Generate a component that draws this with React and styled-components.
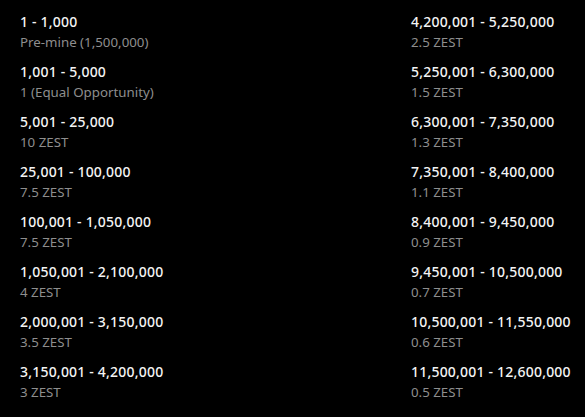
import React from 'react';
import styled, { createGlobalStyle } from 'styled-components';

const GlobalStyle = createGlobalStyle`
  html, body {
    margin: 0;
    background: #000;
  }
`;

const left = [
  ['1 - 1,000', 'Pre-mine (1,500,000)'],
  ['1,001 - 5,000', '1 (Equal Opportunity)'],
  ['5,001 - 25,000', '10 ZEST'],
  ['25,001 - 100,000', '7.5 ZEST'],
  ['100,001 - 1,050,000', '7.5 ZEST'],
  ['1,050,001 - 2,100,000', '4 ZEST'],
  ['2,000,001 - 3,150,000', '3.5 ZEST'],
  ['3,150,001 - 4,200,000', '3 ZEST'],
];

const right = [
  ['4,200,001 - 5,250,000', '2.5 ZEST'],
  ['5,250,001 - 6,300,000', '1.5 ZEST'],
  ['6,300,001 - 7,350,000', '1.3 ZEST'],
  ['7,350,001 - 8,400,000', '1.1 ZEST'],
  ['8,400,001 - 9,450,000', '0.9 ZEST'],
  ['9,450,001 - 10,500,000', '0.7 ZEST'],
  ['10,500,001 - 11,550,000', '0.6 ZEST'],
  ['11,500,001 - 12,600,000', '0.5 ZEST'],
];

const App = () => {
  return (
    <>
      <GlobalStyle />
      <Schedule>
        {[left, right].map((col, i) => (
          <Column key={i}>
            {col.map(([range, reward]) => (
              <Tier key={range}>
                <Range>{range}</Range>
                <Reward>{reward}</Reward>
              </Tier>
            ))}
          </Column>
        ))}
      </Schedule>
    </>
  );
};

export default App;

const Schedule = styled.div`
  width: 585px;
  height: 417px;
  box-sizing: border-box;
  padding: 12px 0 0 20px;
  display: grid;
  grid-template-columns: 391px auto;
  background: #000;
  font-family: "Noto Sans", "Open Sans", sans-serif;
`;

const Column = styled.div`
  display: flex;
  flex-direction: column;
  gap: 10px;
`;

const Tier = styled.div`
  display: flex;
  flex-direction: column;
  line-height: 20px;
`;

const Range = styled.span`
  color: #f4f4f4;
  font-size: 14px;
  font-weight: 500;
  letter-spacing: 0.2px;
`;

const Reward = styled.span`
  color: #8e8e8e;
  font-size: 13.3px;
  font-weight: 400;
`;
